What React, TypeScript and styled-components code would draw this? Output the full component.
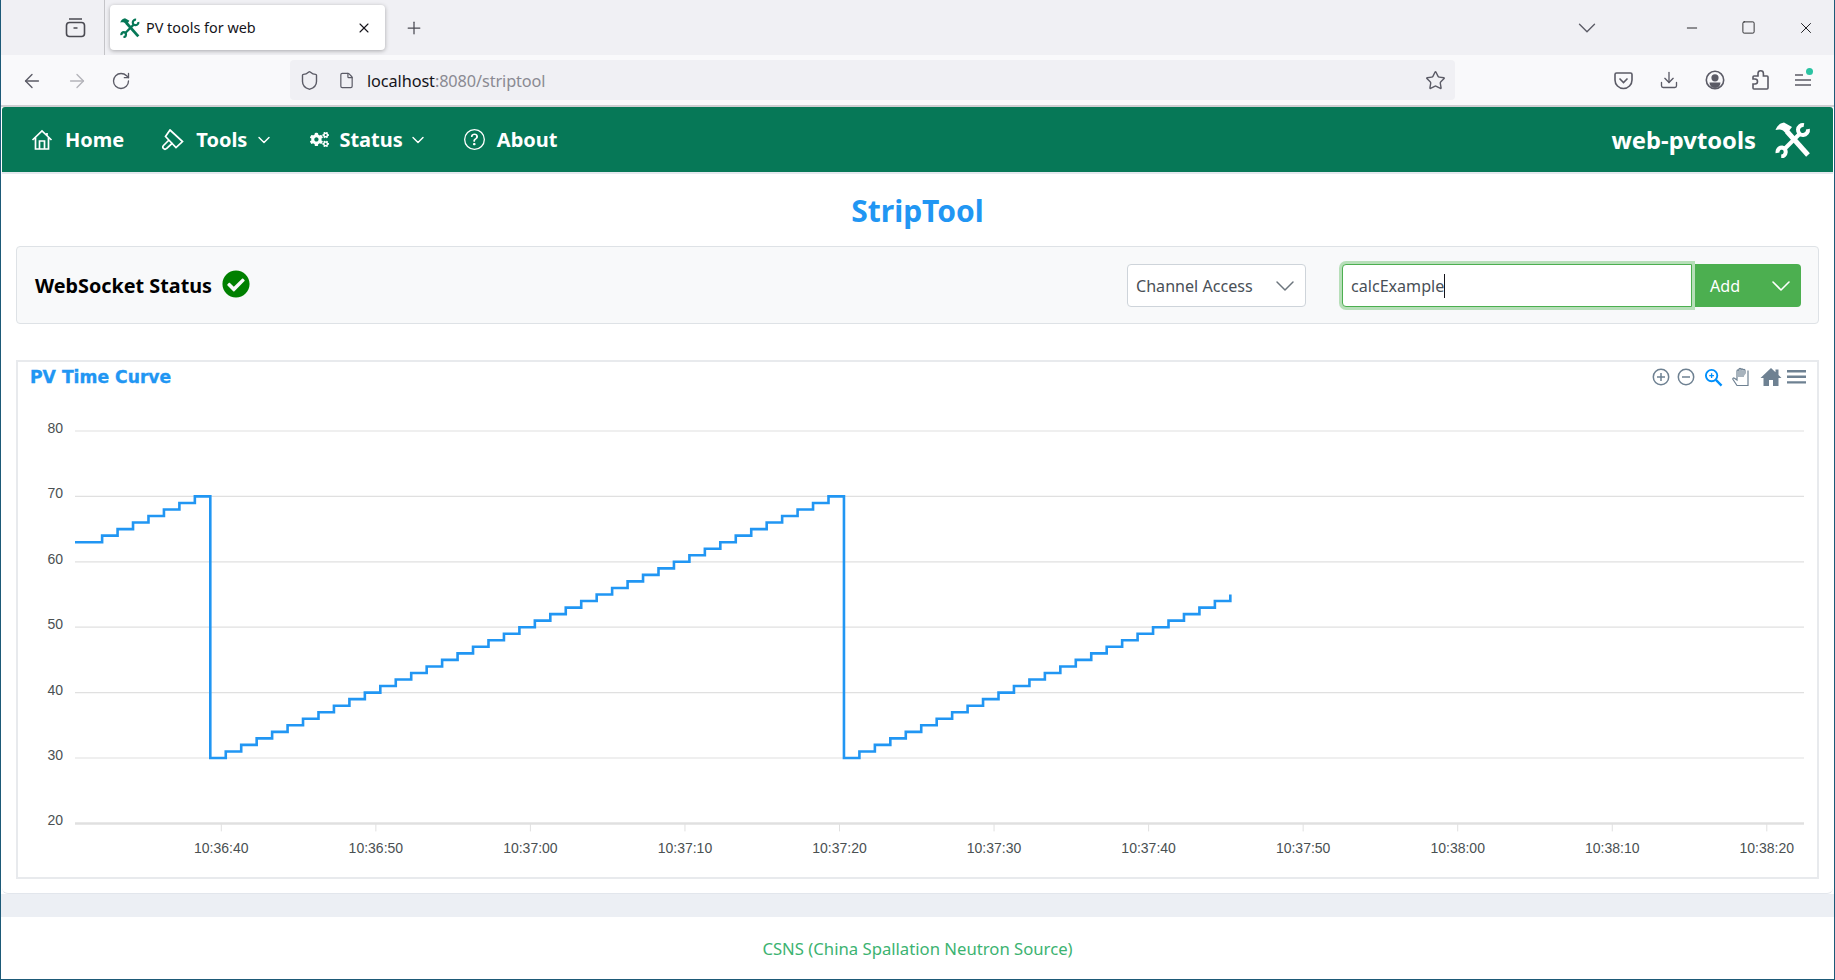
import * as React from "react";
import styled, { createGlobalStyle } from "styled-components";
import {
  ArrowLeft,
  ArrowRight,
  ChevronDown,
  Download,
  File,
  Minus,
  Plus,
  RotateCw,
  Shield,
  Square,
  Star,
  X,
} from "lucide-react";
import { BsQuestionCircle } from "react-icons/bs";
import { FaCheckCircle, FaCogs } from "react-icons/fa";

const GlobalStyle = createGlobalStyle`
  html, body {
    margin: 0;
    padding: 0;
    background: #fff;
    overflow: hidden;
  }
  * {
    box-sizing: border-box;
  }
`;

const Window = styled.div`
  width: 1835px;
  height: 980px;
  display: flex;
  flex-direction: column;
  border: 1px solid #1d5a78;
  border-top: 0;
  font-family: "Noto Sans", sans-serif;
  overflow: hidden;
`;

const TabBar = styled.div`
  height: 55px;
  background: #f0f0f4;
  display: flex;
  align-items: center;
  color: #4a4a52;
`;
const ViewButton = styled.div`
  width: 104px;
  height: 55px;
  padding-left: 64px;
  display: flex;
  align-items: center;
  border-right: 1px solid #c4c4c8;
`;
const Tab = styled.div`
  margin-left: 5px;
  width: 275px;
  height: 45px;
  padding: 0 13px 0 10px;
  background: #fff;
  border-radius: 4px;
  box-shadow: 0 1px 4px rgba(0, 0, 0, 0.3);
  display: flex;
  align-items: center;
  font-size: 14.4px;
  color: #15141a;
`;
const Favicon = styled.span`
  display: flex;
  color: #067857;
`;
const TabTitle = styled.span`
  flex: 1;
  margin-left: 6px;
`;
const NewTab = styled.div`
  margin-left: 19px;
  display: flex;
`;
const WindowControls = styled.div`
  margin-left: auto;
  display: flex;
  align-items: center;
  color: #1b1b1f;
`;
const ListTabs = styled.div`
  display: flex;
  color: #5b5b66;
  margin-right: 61px;
`;
const Control = styled.div`
  width: 57px;
  display: flex;
  justify-content: center;
`;

const Toolbar = styled.div`
  height: 52px;
  background: #f9f9fb;
  border-bottom: 2px solid #cfcfd2;
  display: flex;
  align-items: center;
  color: #5b5b66;
`;
const NavButtons = styled.div`
  width: 289px;
  padding: 1px 0 0 20px;
  display: flex;
  align-items: center;
  gap: 23px;
`;
const UrlBar = styled.div`
  width: 1165px;
  height: 40px;
  background: #f0f0f4;
  border-radius: 4px;
  padding: 0 9px;
  display: flex;
  align-items: center;
`;
const UrlIcons = styled.div`
  display: flex;
  gap: 18px;
  align-items: center;
  margin-right: 12px;
`;
const UrlText = styled.div`
  flex: 1;
  padding-top: 1px;
  font-size: 16.3px;
  color: #8a8a92;
  letter-spacing: -0.1px;
  & b {
    font-weight: 400;
    color: #15141a;
  }
`;
const ToolIcons = styled.div`
  margin-left: 159px;
  display: flex;
  align-items: center;
  gap: 26px;
`;
const MenuButton = styled.div`
  position: relative;
  display: flex;
  &::after {
    content: "";
    position: absolute;
    top: -4px;
    right: -2px;
    width: 7px;
    height: 7px;
    border-radius: 50%;
    background: #2ac3a2;
  }
`;

const Page = styled.div`
  flex: 1;
  display: flex;
  flex-direction: column;
  background: #fff;
`;
const NavBar = styled.nav`
  height: 65px;
  margin: 0 1px;
  padding: 0 22px 0 29px;
  background: #067857;
  color: #fff;
  border-radius: 3px 3px 0 0;
  display: flex;
  align-items: center;
  gap: 38px;
  font-size: 20px;
  font-weight: 700;
`;
const NavItem = styled.div<{ $gap?: number }>`
  display: flex;
  align-items: center;
  gap: ${(props) => props.$gap ?? 12}px;
`;
const NavChevron = styled(ChevronDown)`
  margin: 0 -2px 0 -5px;
`;
const Brand = styled.div`
  margin-left: auto;
  display: flex;
  align-items: center;
  gap: 19px;
  font-size: 23.8px;
`;
const Content = styled.main`
  height: 722px;
  margin: 0 1px;
  padding: 0 14px;
  background: #fff;
  border-top: 2px solid #e4e8ee;
  border-bottom: 1px solid #e2e6ec;
  border-radius: 0 0 6px 6px;
  display: flex;
  flex-direction: column;
`;
const PageTitle = styled.h1`
  margin: 0;
  height: 72px;
  display: flex;
  align-items: center;
  justify-content: center;
  font-size: 30px;
  font-weight: 700;
  color: #2196f3;
`;
const StatusPanel = styled.section`
  height: 78px;
  padding: 0 17px 0 18px;
  background: #f8f9fa;
  border: 1px solid #dee2e6;
  border-radius: 4px;
  display: flex;
  align-items: center;
`;
const StatusLabel = styled.span`
  font-size: 19.8px;
  font-weight: 700;
  color: #000;
`;
const StatusIcon = styled(FaCheckCircle)`
  width: 28px;
  height: 28px;
  margin-left: 10px;
  margin-top: -3px;
  color: #008000;
`;
const ProtocolSelect = styled.div`
  margin-left: auto;
  width: 179px;
  height: 43px;
  padding: 2px 4px 0 8px;
  background: #fff;
  border: 1px solid #ced4da;
  border-radius: 4px;
  display: flex;
  align-items: center;
  justify-content: space-between;
  font-size: 16.1px;
  color: #495057;
`;
const PvField = styled.div`
  margin-left: 36px;
  width: 350px;
  height: 43px;
  padding: 2px 8px 0;
  background: #fff;
  border: 1px solid #4caf50;
  border-radius: 4px 0 0 4px;
  box-shadow: 0 0 0 3px #b7dfb9;
  display: flex;
  align-items: center;
  font-size: 16.1px;
  color: #495057;
`;
const Caret = styled.span`
  width: 1px;
  height: 24px;
  background: #15141a;
`;
const AddButton = styled.div`
  margin-left: 3px;
  width: 106px;
  height: 43px;
  padding: 2px 4px 0 15px;
  background: #4caf50;
  color: #fff;
  border-radius: 0 4px 4px 0;
  display: flex;
  align-items: center;
  justify-content: space-between;
  font-size: 16.1px;
`;
const ChartCard = styled.section`
  margin-top: 36px;
  height: 519px;
  border: 2px solid #e8eaed;
  display: flex;
  flex-direction: column;
`;
const ChartHeader = styled.div`
  height: 30px;
  padding: 0 11px 0 12px;
  display: flex;
  align-items: center;
  justify-content: space-between;
`;
const ChartTitle = styled.div`
  font-family: "DejaVu Sans", sans-serif;
  font-size: 17.2px;
  font-weight: 700;
  color: #2196f3;
  -webkit-text-stroke: 0.35px #2196f3;
`;
const ChartTools = styled.div`
  display: flex;
  align-items: center;
  color: #6e8192;
`;
const ToolSlot = styled.svg<{ $gap?: number }>`
  display: block;
  margin-left: ${(props) => props.$gap ?? 6}px;
`;
const ChartCanvas = styled.svg`
  display: block;
  flex: none;
`;
const AxisText = styled.text`
  font-family: "Liberation Sans", sans-serif;
  font-size: 14px;
  fill: #4a5052;
`;
const Strip = styled.div`
  height: 23px;
  background: #eceff4;
`;
const Footer = styled.footer`
  flex: 1;
  display: flex;
  align-items: center;
  justify-content: center;
  padding-top: 1px;
  font-size: 16.7px;
  color: #3cb371;
`;

// chart geometry, in page pixels minus the canvas origin
const ORIGIN_X = 18;
const ORIGIN_Y = 392;
const SEC = 15.455;
const yOf = (v: number) => 823.4 - (v - 20) * 6.54 - ORIGIN_Y;
const FIRST_DROP = 210.3 - ORIGIN_X;

function curvePath() {
  const left = 75 - ORIGIN_X;
  let d = `M${left} ${yOf(63)}`;
  let x = FIRST_DROP - 7 * SEC;
  let value = 63;
  const end = FIRST_DROP + 66 * SEC;
  while (x <= end + 0.01) {
    value = value === 70 ? 30 : value + 1;
    d += `H${x.toFixed(2)}V${yOf(value).toFixed(2)}`;
    x += SEC;
  }
  return d;
}

const yTicks = [80, 70, 60, 50, 40, 30, 20];
const xTicks = [
  "10:36:40",
  "10:36:50",
  "10:37:00",
  "10:37:10",
  "10:37:20",
  "10:37:30",
  "10:37:40",
  "10:37:50",
  "10:38:00",
  "10:38:10",
  "10:38:20",
];

function Chart() {
  return (
    <ChartCanvas width={1798} height={485}>
      {yTicks.map((v) => (
        <React.Fragment key={v}>
          <line
            x1={57}
            x2={1786}
            y1={yOf(v)}
            y2={yOf(v)}
            stroke="#e0e0e0"
            strokeWidth={v === 20 ? 2.5 : 1.2}
          />
          <AxisText x={45} y={yOf(v) + 2} textAnchor="end">
            {v}
          </AxisText>
        </React.Fragment>
      ))}
      {xTicks.map((t, i) => {
        const x = 221.3 - ORIGIN_X + i * 154.55;
        return (
          <React.Fragment key={t}>
            <line x1={x} x2={x} y1={yOf(20)} y2={yOf(20) + 8} stroke="#e0e0e0" />
            <AxisText x={x} y={461} textAnchor="middle">
              {t}
            </AxisText>
          </React.Fragment>
        );
      })}
      <path d={curvePath()} fill="none" stroke="#2196f3" strokeWidth={2.6} />
    </ChartCanvas>
  );
}

function ChartToolbar() {
  return (
    <ChartTools>
      <ToolSlot width="18" height="18" viewBox="0 0 18 18" fill="none" stroke="currentColor" strokeWidth="1.5">
        <circle cx="9" cy="9" r="7.7" />
        <path d="M5 9h8M9 5v8" />
      </ToolSlot>
      <ToolSlot $gap={7} width="18" height="18" viewBox="0 0 18 18" fill="none" stroke="currentColor" strokeWidth="1.5">
        <circle cx="9" cy="9" r="7.7" />
        <path d="M5 9h8" />
      </ToolSlot>
      <ToolSlot $gap={9} width="19" height="19" viewBox="0 0 20 20" fill="none" stroke="#008ffb" strokeWidth="2">
        <circle cx="8" cy="8" r="6" />
        <path d="M12.5 12.5L18.5 18.5" strokeWidth="2.4" />
        <path d="M5.5 8h5M8 5.5v5" strokeWidth="1.4" />
      </ToolSlot>
      <ToolSlot $gap={9} width="18" height="20" viewBox="0 0 18 20" fill="#fff" stroke="#6e8192" strokeWidth="1.2">
        <path d="M5 18.5L1 12.5c-.6-1 .6-2 1.5-1.2L5 13V4c0-1.4 2-1.4 2 0V2.5c0-1.4 2-1.4 2 0v.5c0-1.4 2-1.4 2 0v.5c0-1.4 2-1.4 2 0V18.5z" />
        <path d="M7 4v6M9 3v7M11 3.5V10M5 18.5h11V3.5" />
      </ToolSlot>
      <ToolSlot $gap={10} width="22" height="20" viewBox="0 0 22 20" fill="currentColor">
        <path d="M11 1L0.5 11h3v8h5.5v-6h4v6h5.5v-8h3l-3-2.9V2.5h-3v2.7z" />
      </ToolSlot>
      <ToolSlot $gap={5} width="19" height="14" viewBox="0 0 19 14" fill="currentColor">
        <path d="M0 0h19v2.4H0zM0 5.6h19V8H0zM0 11.2h19v2.4H0z" />
      </ToolSlot>
    </ChartTools>
  );
}

// crossed hammer and wrench, used for the favicon and the brand
function ToolsLogo({ size }: { size: number }) {
  return (
    <svg width={size} height={size} viewBox="0 0 36 36" fill="none" stroke="currentColor">
      <path d="M32.9 7.1A5 5 0 1 1 28.9 3.1" strokeWidth="4" />
      <path d="M25 11.5L10 26.5" strokeWidth="4" />
      <path d="M2.57 30.78A4.5 4.5 0 0 1 7 25.5A4.5 4.5 0 0 1 6.22 34.43" strokeWidth="4" />
      <path d="M12 9.5L33 33" strokeWidth="5" />
      <path
        d="M0.5 8C2 4 5 1 9 0.5L17 5L11.5 12L8 8.5C5 7 3 7.5 0.5 8z"
        fill="currentColor"
        strokeWidth="0"
      />
    </svg>
  );
}

export default function App() {
  return (
    <>
      <GlobalStyle />
      <Window>
        <TabBar>
          <ViewButton>
            <svg width="21" height="21" viewBox="0 0 21 21" fill="none" stroke="#4a4a52" strokeWidth="1.6">
              <rect x="1.5" y="5.5" width="18" height="14" rx="3" />
              <path d="M4 2h13M8.5 11h4" />
            </svg>
          </ViewButton>
          <Tab>
            <Favicon>
              <ToolsLogo size={20} />
            </Favicon>
            <TabTitle>PV tools for web</TabTitle>
            <X size={16} strokeWidth={1.6} />
          </Tab>
          <NewTab>
            <Plus size={20} strokeWidth={1.5} />
          </NewTab>
          <WindowControls>
            <ListTabs>
              <ChevronDown size={30} strokeWidth={1.1} />
            </ListTabs>
            <Control>
              <Minus size={16} strokeWidth={1.4} />
            </Control>
            <Control>
              <Square size={15} strokeWidth={1.4} />
            </Control>
            <Control>
              <X size={18} strokeWidth={1.3} />
            </Control>
          </WindowControls>
        </TabBar>
        <Toolbar>
          <NavButtons>
            <ArrowLeft size={22} strokeWidth={1.5} />
            <ArrowRight size={22} strokeWidth={1.5} color="#b4b4ba" />
            <RotateCw size={20} strokeWidth={1.6} />
          </NavButtons>
          <UrlBar>
            <UrlIcons>
              <Shield size={21} strokeWidth={1.6} />
              <File size={17} strokeWidth={1.7} />
            </UrlIcons>
            <UrlText>
              <b>localhost</b>:8080/striptool
            </UrlText>
            <Star size={21} strokeWidth={1.6} />
          </UrlBar>
          <ToolIcons>
            <svg width="19" height="19" viewBox="0 0 19 19" fill="none" stroke="currentColor" strokeWidth="1.6">
              <path d="M2.5 2h14a1.5 1.5 0 0 1 1.5 1.5V9a8.5 8.5 0 0 1-17 0V3.5A1.5 1.5 0 0 1 2.5 2z" />
              <path d="M5.5 7.5l4 4 4-4" />
            </svg>
            <Download size={20} strokeWidth={1.6} />
            <svg width="20" height="20" viewBox="0 0 20 20" fill="none" stroke="currentColor" strokeWidth="1.6">
              <circle cx="10" cy="10" r="8.7" />
              <circle cx="10" cy="7.8" r="2.8" fill="currentColor" />
              <path d="M4.5 12.5h11a5.5 5.5 0 0 1-11 0z" fill="currentColor" strokeWidth="0" />
            </svg>
            <svg width="18" height="20" viewBox="0 0 18 20" fill="none" stroke="currentColor" strokeWidth="1.6">
              <path d="M7 3.5a2.7 2.7 0 0 1 5.4 0V6H16a1 1 0 0 1 1 1v11a1 1 0 0 1-1 1H3a1 1 0 0 1-1-1V14h2a2.5 2.5 0 0 0 0-5H2V7a1 1 0 0 1 1-1h4z" />
            </svg>
            <MenuButton>
              <svg width="16" height="16" viewBox="0 0 16 16" fill="none" stroke="currentColor" strokeWidth="1.6">
                <path d="M0 3h8M0 8h16M0 13h16" />
              </svg>
            </MenuButton>
          </ToolIcons>
        </Toolbar>
        <Page>
          <NavBar>
            <NavItem>
              <svg width="22" height="21" viewBox="0 0 22 21" fill="none" stroke="currentColor" strokeWidth="1.7">
                <path d="M1.5 11L11 2l9.5 9M4.5 8.5V20h13V8.500M8.500 20v-8h5v8M16 4v3" />
              </svg>
              Home
            </NavItem>
            <NavItem>
              <svg width="22" height="22" viewBox="0 0 22 22" fill="none" stroke="currentColor" strokeWidth="1.7">
                <path d="M8 1L20.500 12.500L14 18.500L3.500 7.500z" />
                <path d="M7 11L1.500 16.500a2 2 0 0 0 3 3L10.500 14" />
              </svg>
              Tools
              <NavChevron size={20} strokeWidth={1.7} />
            </NavItem>
            <NavItem $gap={10}>
              <FaCogs size={19} />
              Status
              <NavChevron size={20} strokeWidth={1.7} />
            </NavItem>
            <NavItem>
              <BsQuestionCircle size={21} />
              About
            </NavItem>
            <Brand>
              web-pvtools
              <ToolsLogo size={36} />
            </Brand>
          </NavBar>
          <Content>
            <PageTitle>StripTool</PageTitle>
            <StatusPanel>
              <StatusLabel>WebSocket Status</StatusLabel>
              <StatusIcon />
              <ProtocolSelect>
                Channel Access
                <ChevronDown size={32} strokeWidth={1.1} color="#6c757d" />
              </ProtocolSelect>
              <PvField>
                calcExample
                <Caret />
              </PvField>
              <AddButton>
                Add
                <ChevronDown size={32} strokeWidth={1.2} />
              </AddButton>
            </StatusPanel>
            <ChartCard>
              <ChartHeader>
                <ChartTitle>PV Time Curve</ChartTitle>
                <ChartToolbar />
              </ChartHeader>
              <Chart />
            </ChartCard>
          </Content>
          <Strip />
          <Footer>CSNS (China Spallation Neutron Source)</Footer>
        </Page>
      </Window>
    </>
  );
}
